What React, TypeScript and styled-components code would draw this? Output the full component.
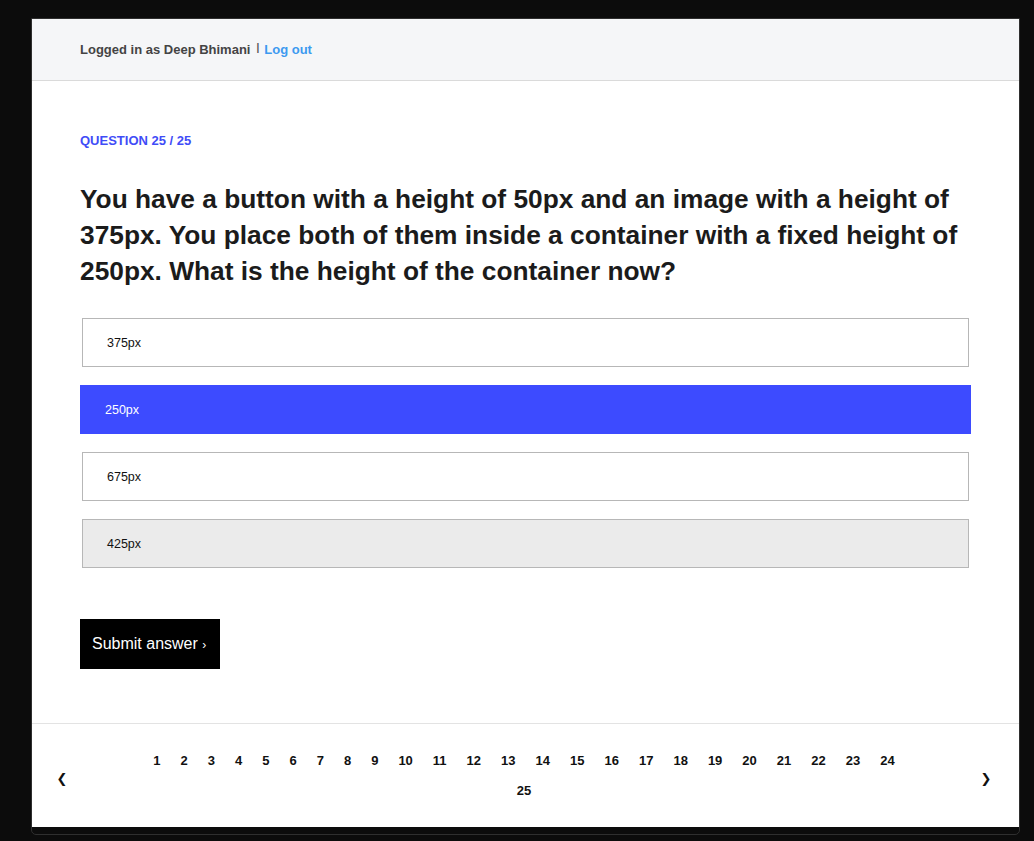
import React, { useState } from "react";
import styled, { createGlobalStyle } from "styled-components";

const GlobalStyle = createGlobalStyle`
  html, body { margin: 0; padding: 0; }
  body {
    background: #0c0c0c;
    font-family: "Liberation Sans", Arial, Helvetica, sans-serif;
    -webkit-font-smoothing: antialiased;
  }
  * { box-sizing: border-box; }
`;

const Stage = styled.div`
  padding: 18px 0 0 31px;
  height: 841px;
`;

const Frame = styled.div`
  width: 989px;
  border: 1px solid #2f2f2f;
  border-radius: 0 0 5px 5px;
  background: #0c0c0c;
  padding-bottom: 7px;
`;

const Page = styled.div`
  background: #ffffff;
  display: flex;
  flex-direction: column;
`;

const Header = styled.header`
  height: 62px;
  background: #f5f6f8;
  border-bottom: 1px solid #dadada;
  display: flex;
  align-items: center;
  padding: 0 48px 1px;
  font-size: 13px;
  font-weight: 700;
  color: #444444;
`;

const Separator = styled.span`
  font-size: 10px;
  margin: 0 5px 0 6px;
  position: relative;
  top: -2px;
  color: #555;
`;

const LogOut = styled.a`
  color: #3d9af0;
  text-decoration: none;
  cursor: pointer;
`;

const Main = styled.main`
  padding: 52px 48px 54px;
`;

const Label = styled.div`
  font-size: 13px;
  line-height: 16px;
  font-weight: 700;
  color: #3f4cf7;
  text-transform: uppercase;
`;

const Question = styled.h1`
  margin: 32px 0 29px;
  font-size: 26.3px;
  line-height: 36px;
  font-weight: 700;
  color: #1b1b1b;
  max-width: 890px;
`;

const Options = styled.div`
  display: flex;
  flex-direction: column;
  gap: 18px;
`;

const Option = styled.div<{ $selected?: boolean; $hover?: boolean }>`
  height: 49px;
  display: flex;
  align-items: center;
  font-size: 12.5px;
  cursor: pointer;
  margin: ${(p) => (p.$selected ? "0" : "0 2px")};
  padding: ${(p) => (p.$selected ? "0 25px" : "0 24px")};
  border: ${(p) => (p.$selected ? "none" : "1px solid #b7b7b7")};
  background: ${(p) =>
    p.$selected ? "#3d4bff" : p.$hover ? "#ebebeb" : "#ffffff"};
  color: ${(p) => (p.$selected ? "#ffffff" : "#111111")};
`;

const Submit = styled.button`
  margin-top: 51px;
  height: 50px;
  width: 140px;
  background: #000000;
  color: #ffffff;
  border: none;
  border-radius: 0;
  font-family: inherit;
  font-size: 16px;
  text-align: left;
  padding: 0 12px;
  cursor: pointer;
`;

const Chevron = styled.span`
  font-size: 12px;
`;

const Footer = styled.footer`
  border-top: 1px solid #e3e3e3;
  height: 104px;
  display: flex;
  align-items: center;
  padding: 0 27px 0 24px;
`;

const Arrow = styled.button`
  background: none;
  border: none;
  padding: 0;
  width: 12px;
  font-size: 13px;
  font-family: "DejaVu Sans", sans-serif;
  font-weight: 700;
  color: #111;
  cursor: pointer;
  position: relative;
  top: 3px;
`;

const Pages = styled.div`
  flex: 1;
  display: flex;
  flex-wrap: wrap;
  justify-content: center;
  padding: 0 70px;
`;

const PageNum = styled.span`
  font-size: 13px;
  font-weight: 700;
  line-height: 30px;
  padding: 0 10px;
  color: #111;
  cursor: pointer;
`;

const options = ["375px", "250px", "675px", "425px"];

export default function App() {
  const [selected, setSelected] = useState(1);
  return (
    <>
      <GlobalStyle />
      <Stage>
        <Frame>
          <Page>
            <Header>
              Logged in as Deep Bhimani
              <Separator>|</Separator>
              <LogOut>Log out</LogOut>
            </Header>
            <Main>
              <Label>Question 25 / 25</Label>
              <Question>
                You have a button with a height of 50px and an image with a
                height of 375px. You place both of them inside a container with
                a fixed height of 250px. What is the height of the container
                now?
              </Question>
              <Options>
                {options.map((o, i) => (
                  <Option
                    key={o}
                    $selected={i === selected}
                    $hover={i === 3}
                    onClick={() => setSelected(i)}
                  >
                    {o}
                  </Option>
                ))}
              </Options>
              <Submit>
                Submit answer <Chevron>›</Chevron>
              </Submit>
            </Main>
            <Footer>
              <Arrow>❮</Arrow>
              <Pages>
                {Array.from({ length: 25 }, (_, i) => (
                  <PageNum key={i}>{i + 1}</PageNum>
                ))}
              </Pages>
              <Arrow>❯</Arrow>
            </Footer>
          </Page>
        </Frame>
      </Stage>
    </>
  );
}
